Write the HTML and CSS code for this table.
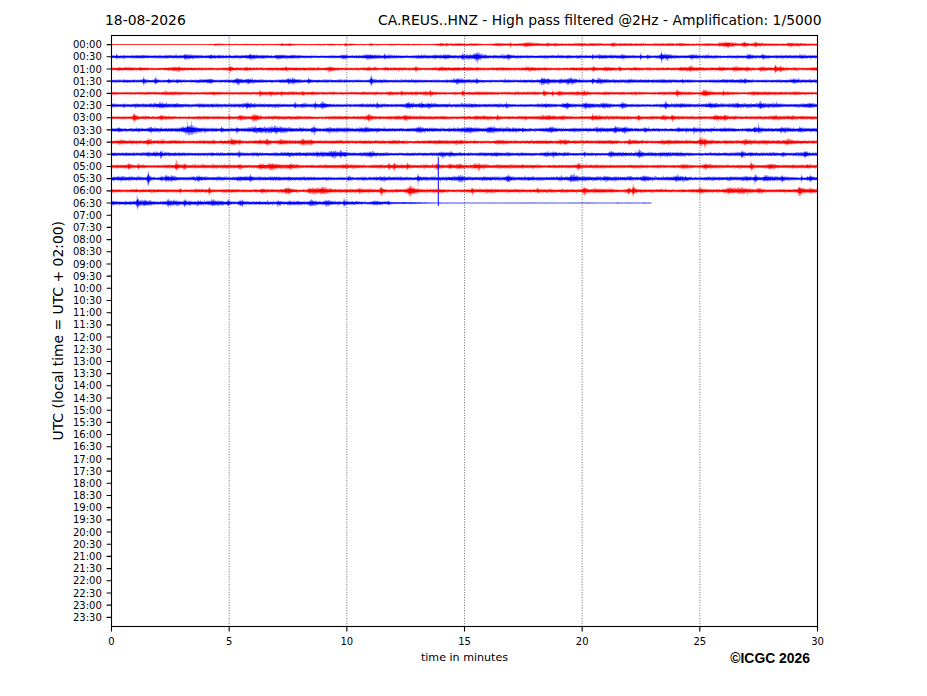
FILE: index.html
```html
<!DOCTYPE html>
<html>
<head>
<meta charset="utf-8">
<title>CA.REUS..HNZ helicorder</title>
<link rel="stylesheet" href="styles.css">
</head>
<body>
<div class="fig">
  <div class="titles">
    <span class="t-left">18-08-2026</span>
    <span class="t-right">CA.REUS..HNZ - High pass filtered @2Hz - Amplification: 1/5000</span>
  </div>
  <div class="body">
    <div class="ylabel"><span>UTC (local time = UTC + 02:00)</span></div>
    <svg class="plot" id="plot" viewBox="66 30 861 620" width="861" height="620" xmlns="http://www.w3.org/2000/svg">
      <defs>
        <clipPath id="axclip"><rect x="111.5" y="35.5" width="706" height="591"/></clipPath>
      </defs>
      <g id="grid" class="grid"></g>
      <g id="traces" clip-path="url(#axclip)"></g>
      <rect class="spine" x="111.5" y="35.5" width="706" height="591"/>
      <path id="ticks" class="ticks" d=""/>
      <g class="tick-label ylab">
        <text x="101.8" y="48.20">00:00</text>
        <text x="101.8" y="60.39">00:30</text>
        <text x="101.8" y="72.57">01:00</text>
        <text x="101.8" y="84.76">01:30</text>
        <text x="101.8" y="96.94">02:00</text>
        <text x="101.8" y="109.13">02:30</text>
        <text x="101.8" y="121.32">03:00</text>
        <text x="101.8" y="133.50">03:30</text>
        <text x="101.8" y="145.69">04:00</text>
        <text x="101.8" y="157.87">04:30</text>
        <text x="101.8" y="170.06">05:00</text>
        <text x="101.8" y="182.25">05:30</text>
        <text x="101.8" y="194.43">06:00</text>
        <text x="101.8" y="206.62">06:30</text>
        <text x="101.8" y="218.80">07:00</text>
        <text x="101.8" y="230.99">07:30</text>
        <text x="101.8" y="243.18">08:00</text>
        <text x="101.8" y="255.36">08:30</text>
        <text x="101.8" y="267.55">09:00</text>
        <text x="101.8" y="279.73">09:30</text>
        <text x="101.8" y="291.92">10:00</text>
        <text x="101.8" y="304.11">10:30</text>
        <text x="101.8" y="316.29">11:00</text>
        <text x="101.8" y="328.48">11:30</text>
        <text x="101.8" y="340.66">12:00</text>
        <text x="101.8" y="352.85">12:30</text>
        <text x="101.8" y="365.04">13:00</text>
        <text x="101.8" y="377.22">13:30</text>
        <text x="101.8" y="389.41">14:00</text>
        <text x="101.8" y="401.59">14:30</text>
        <text x="101.8" y="413.78">15:00</text>
        <text x="101.8" y="425.97">15:30</text>
        <text x="101.8" y="438.15">16:00</text>
        <text x="101.8" y="450.34">16:30</text>
        <text x="101.8" y="462.52">17:00</text>
        <text x="101.8" y="474.71">17:30</text>
        <text x="101.8" y="486.90">18:00</text>
        <text x="101.8" y="499.08">18:30</text>
        <text x="101.8" y="511.27">19:00</text>
        <text x="101.8" y="523.45">19:30</text>
        <text x="101.8" y="535.64">20:00</text>
        <text x="101.8" y="547.83">20:30</text>
        <text x="101.8" y="560.01">21:00</text>
        <text x="101.8" y="572.20">21:30</text>
        <text x="101.8" y="584.38">22:00</text>
        <text x="101.8" y="596.57">22:30</text>
        <text x="101.8" y="608.76">23:00</text>
        <text x="101.8" y="620.94">23:30</text>
      </g>
      <g class="tick-label xlab">
        <text x="111.5" y="644.5">0</text>
        <text x="229.17" y="644.5">5</text>
        <text x="346.83" y="644.5">10</text>
        <text x="464.5" y="644.5">15</text>
        <text x="582.17" y="644.5">20</text>
        <text x="699.83" y="644.5">25</text>
        <text x="817.5" y="644.5">30</text>
      </g>
    </svg>
  </div>
  <div class="foot">
    <span class="xlabel">time in minutes</span>
    <span class="copy">©ICGC 2026</span>
  </div>
</div>
<script src="script.js"></script>
</body>
</html>
```

FILE: styles.css
```css
body {
  margin: 0;
  background: #ffffff;
}

.fig {
  width: 927px;
  height: 696px;
  background: #ffffff;
  color: #000000;
  font-family: "DejaVu Sans", "Noto Sans", sans-serif;
  overflow: hidden;
}

.titles {
  height: 30px;
  box-sizing: border-box;
  padding: 12px 105.5px 0 105px;
  display: flex;
  justify-content: space-between;
  font-size: 13.9px;
  line-height: 16px;
  white-space: nowrap;
}

.body {
  display: flex;
  height: 620px;
}

.ylabel {
  width: 66px;
  flex: none;
  box-sizing: border-box;
  padding: 5.5px 0 23.5px;
  display: flex;
  align-items: center;
  justify-content: flex-end;
}

.ylabel span {
  writing-mode: vertical-rl;
  transform: rotate(180deg);
  font-size: 13.9px;
  line-height: 16px;
  white-space: nowrap;
}

.plot {
  display: block;
  flex: none;
}

.spine {
  fill: none;
  stroke: #000000;
  stroke-width: 1.1;
}

.ticks {
  fill: none;
  stroke: #000000;
  stroke-width: 1.1;
}

.grid line {
  stroke: #444444;
  stroke-width: 0.8;
  stroke-dasharray: 1 1.6;
}

.tick-label {
  font-family: "DejaVu Sans", sans-serif;
  font-size: 10px;
  fill: #000000;
}

.ylab text {
  text-anchor: end;
}

.xlab text {
  text-anchor: middle;
}

.foot {
  display: grid;
  grid-template-columns: 111.5px 706px;
  height: 46px;
}

.xlabel {
  grid-area: 1 / 2;
  justify-self: center;
  align-self: start;
  font-size: 11.1px;
  line-height: 13px;
  padding-top: 0.7px;
  white-space: nowrap;
}

.copy {
  grid-area: 1 / 2;
  justify-self: end;
  align-self: start;
  margin-right: 7.5px;
  font-family: "Liberation Sans", Arial, sans-serif;
  font-weight: bold;
  font-size: 13.9px;
  line-height: 16px;
  white-space: nowrap;
}
```

FILE: script.js
```js
(function () {
  var NS = 'http://www.w3.org/2000/svg';
  var X0 = 111.5, W = 706, Y0 = 44.6, DY = 12.186, TOP = 35.5, BOT = 626.5;

  function rng(seed) {
    var a = seed >>> 0;
    return function () {
      a = (a + 0x6D2B79F5) >>> 0;
      var t = a;
      t = Math.imul(t ^ (t >>> 15), t | 1);
      t ^= t + Math.imul(t ^ (t >>> 7), t | 61);
      return ((t ^ (t >>> 14)) >>> 0) / 4294967296;
    };
  }

  // ticks and grid
  var d = '';
  for (var i = 0; i < 48; i++) {
    var y = (Y0 + i * DY).toFixed(2);
    d += 'M106.6 ' + y + 'H111.5';
  }
  var grid = document.getElementById('grid');
  for (var k = 0; k <= 6; k++) {
    var x = (X0 + k * W / 6).toFixed(2);
    d += 'M' + x + ' 626.5V631.4';
    if (k > 0 && k < 6) {
      var ln = document.createElementNS(NS, 'line');
      ln.setAttribute('x1', x); ln.setAttribute('x2', x);
      ln.setAttribute('y1', TOP); ln.setAttribute('y2', BOT);
      grid.appendChild(ln);
    }
  }
  document.getElementById('ticks').setAttribute('d', d);

  var RED = '#ff0000', BLUE = '#0000ff';
  var bases = [1.6, 1.75, 1.7, 1.75, 1.6, 1.85, 1.7, 2.0, 1.8, 1.85, 1.8, 1.95, 1.8, 1.75];
  var ev = [
    [[458, 1.2, 6], [474, 0.8, 4], [728, 2.0, 4], [555, 0.8, 3], [680, 0.8, 4], [790, 1.2, 5]],
    [[250, 1.3, 4], [476, 2.2, 4], [470, 1.2, 8], [600, 0.8, 4]],
    [[230, 2.5, 1.5], [330, 1.3, 4], [690, 1.3, 3], [780, 1.8, 3], [440, 0.8, 8]],
    [[371, 6, 1.2], [210, 1.3, 2], [248, 1.3, 3], [544, 2, 3], [600, 1.3, 4], [560, 0.8, 5]],
    [[260, 2.5, 1.5], [544, 3, 1.5], [584, 2, 1.5], [677, 3, 1.5], [270, 0.8, 4]],
    [[160, 1.0, 12], [622, 2.2, 3], [760, 2.5, 2], [710, 1.3, 4], [810, 1.3, 3]],
    [[134, 5, 1.5], [240, 1.8, 3], [253, 1.8, 3], [672, 3, 1.5], [405, 1.8, 3], [715, 1.3, 4]],
    [[255, 1.3, 20], [275, 1.2, 12], [418, 1.8, 4], [490, 1.8, 4], [550, 1.8, 4], [615, 2.5, 2], [597, 1, 4], [645, 2, 1.5], [800, 1.8, 2]],
    [[148, 2.5, 2], [232, 2.5, 3], [745, 1.6, 8], [560, 1.3, 4], [310, 1.3, 3]],
    [[334, 1.6, 6], [442, 1.3, 3], [639, 3, 1.5], [805, 3, 2], [370, 1.3, 4]],
    [[176, 4, 1.5], [437, 2.5, 2], [751, 4, 1.5], [770, 1.8, 3], [290, 1.8, 4], [705, 1.6, 4]],
    [[148, 8, 1.0], [166, 2, 2], [418, 3, 1.2], [755, 3.5, 1.2], [782, 3, 1.5], [810, 2.5, 2], [198, 1.6, 3]],
    [[312, 1.6, 8], [322, 1.6, 6], [381, 4, 1.5], [584, 4, 1.5], [633, 5, 1.2], [799, 4, 1.2], [700, 1.3, 4], [740, 1.6, 10], [410, 1.6, 4]],
    [[137, 6, 1.2], [145, 1.6, 8], [228, 3, 1.2], [240, 2, 1.5], [170, 1.2, 8], [278, 1.2, 3]]
  ];

  function fac(r, x) {
    if (r === 0) {
      if (x < 88) return 0.13;
      if (x < 110) return 0.13 + (x - 88) / 22 * 0.4;
      if (x < 340) return 0.53;
      if (x < 420) return 0.53 + (x - 340) / 80 * 0.32;
      return 0.85;
    }
    if (r === 13) {
      if (x < 267) return 1;
      if (x < 330) return 1 - (x - 267) / 63 * 0.82;
      return 0.18;
    }
    return 1;
  }

  var traces = document.getElementById('traces');
  for (var r = 0; r < 14; r++) {
    var R = rng(24680 + r * 977);
    var L = r === 13 ? 540.2 : W;
    var base = bases[r];
    var yc = Y0 + r * DY;
    var col = r % 2 === 0 ? RED : BLUE;
    var nc = Math.ceil(L / 15) + 3;
    var ctrl = [];
    for (var c = 0; c < nc; c++) ctrl.push(0.82 + 0.36 * R());
    var events = ev[r].map(function (e) { return [e[0] - X0, e[1], e[2]]; });
    for (var n = 0; n < 30; n++) events.push([R() * L, base * (0.15 + Math.pow(R(), 3) * 0.9), 1.5 + R() * 5]);
    for (n = 0; n < 8; n++) events.push([R() * L, base * (0.7 + R() * 1.2), 0.5 + R() * 0.8]);

    var step = 0.5, N = Math.floor(L / step);
    var up = [], dn = [], iu = [], idn = [];
    for (k = 0; k <= N; k++) {
      var xx = k * step;
      var cp = xx / 15, j = Math.floor(cp), f = cp - j, s = (1 - Math.cos(f * Math.PI)) / 2;
      var env = base * (ctrl[j] * (1 - s) + ctrl[j + 1] * s);
      for (var q = 0; q < events.length; q++) {
        var e = events[q], dd = xx - e[0];
        if (dd >= 0) { if (dd < e[2] * 6) env += e[1] * Math.exp(-dd / e[2]); }
        else if (-dd < e[2] * 2) env += e[1] * Math.exp(dd / (e[2] * 0.35));
      }
      env *= fac(r, xx);
      var a = env * (0.5 + 0.7 * R()), b = env * (0.5 + 0.7 * R());
      if (R() < 0.02) a *= 1.6;
      if (R() < 0.02) b *= 1.6;
      var ia = Math.max(0.3, env * 0.48 * (0.8 + 0.4 * R()));
      var ib = Math.max(0.3, env * 0.48 * (0.8 + 0.4 * R()));
      var px = (X0 + xx).toFixed(2);
      up.push(px + ',' + (yc - a).toFixed(2));
      dn.push(px + ',' + (yc + b).toFixed(2));
      iu.push(px + ',' + (yc - ia).toFixed(2));
      idn.push(px + ',' + (yc + ib).toFixed(2));
    }
    var outer = document.createElementNS(NS, 'path');
    outer.setAttribute('d', 'M' + up.join('L') + 'L' + dn.reverse().join('L') + 'Z');
    outer.setAttribute('fill', col);
    outer.setAttribute('fill-opacity', '0.5');
    traces.appendChild(outer);
    var inner = document.createElementNS(NS, 'path');
    inner.setAttribute('d', 'M' + iu.join('L') + 'L' + idn.reverse().join('L') + 'Z');
    inner.setAttribute('fill', col);
    traces.appendChild(inner);

    if (r === 11) {
      var sp = document.createElementNS(NS, 'line');
      sp.setAttribute('x1', '438.3'); sp.setAttribute('x2', '438.3');
      sp.setAttribute('y1', '157'); sp.setAttribute('y2', '206');
      sp.setAttribute('stroke', BLUE); sp.setAttribute('stroke-width', '1');
      traces.appendChild(sp);
    }
  }
})();
```
